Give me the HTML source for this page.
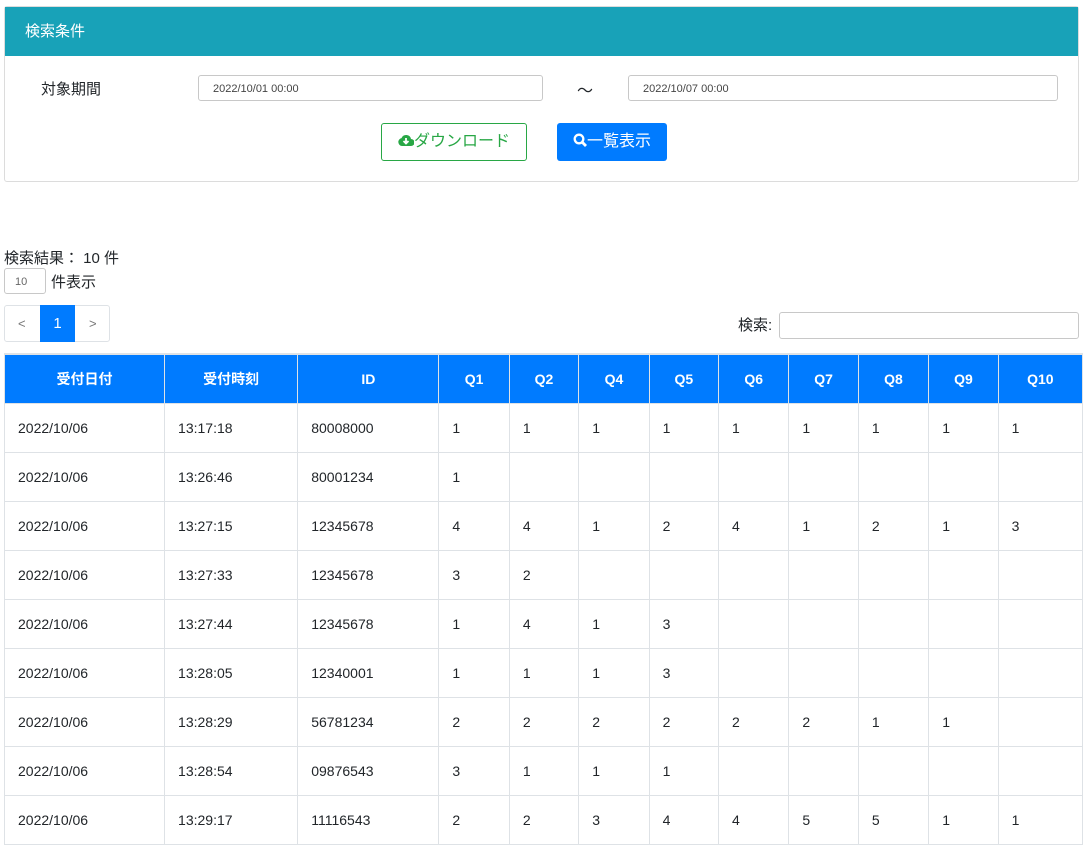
<!DOCTYPE html>
<html><head><meta charset="utf-8"><style>
body{margin:0;background:#fff;font-family:"Liberation Sans","Noto Sans CJK JP",sans-serif;color:#212529;width:1083px;height:840px;overflow:hidden;position:relative}
.a{position:absolute}
.panel{left:4px;top:6px;width:1073px;height:174px;border:1px solid #dcdcdc;border-radius:3px}
.ph{left:0;top:0;width:1073px;height:49px;background:#18a2b8;color:#fff;font-size:15px;line-height:49px;padding-left:20px;box-sizing:border-box}
.inp{border:1px solid #c8c8c8;border-radius:3px;height:26px;font-size:11px;line-height:26px;padding-left:14px;box-sizing:border-box;color:#444}
table{position:absolute;left:4px;top:353px;border-collapse:collapse;font-size:14px}
th{background:#007bff;color:#fff;font-weight:bold;height:48px;border:1px solid #dee2e6;border-top:2px solid #dee2e6;text-align:center;padding:0}
td{height:48px;border:1px solid #dee2e6;padding:0 0 0 13px}
</style></head><body>
<div class="a panel">
<div class="a ph">検索条件</div>
<div class="a" style="left:36px;top:71px;font-size:15px">対象期間</div>
<div class="a inp" style="left:193px;top:68px;width:345px">2022/10/01 00:00</div>
<div class="a" style="left:572px;top:70px;font-size:16px">～</div>
<div class="a inp" style="left:623px;top:68px;width:430px">2022/10/07 00:00</div>
<div class="a" style="left:376px;top:116px;width:146px;height:38px;border:1px solid #28a745;border-radius:3px;box-sizing:border-box;color:#28a745;font-size:16px;line-height:36px;text-align:center">
<svg width="16" height="13" viewBox="0 0 16 13" style="vertical-align:-1px"><path d="M4 12a4 4 0 0 1-.5-7.9A5 5 0 0 1 13 5a3.5 3.5 0 0 1 0 7z" fill="#28a745"/><path d="M8 4v5M5.5 7l2.5 2.5L10.5 7" stroke="#fff" stroke-width="1.8" fill="none"/></svg>ダウンロード</div>
<div class="a" style="left:552px;top:116px;width:110px;height:38px;background:#007bff;border-radius:3px;color:#fff;font-size:16px;line-height:38px;text-align:center">
<svg width="14" height="14" viewBox="0 0 14 14" style="vertical-align:-1px"><circle cx="6" cy="6" r="4.3" stroke="#fff" stroke-width="2.3" fill="none"/><path d="M9 9l4 4" stroke="#fff" stroke-width="2.8"/></svg>一覧表示</div>
</div>
<div class="a" style="left:4px;top:247px;font-size:15px">検索結果： 10 件</div>
<div class="a inp" style="left:4px;top:268px;width:42px;height:26px;padding-left:10px;color:#666">10</div>
<div class="a" style="left:51px;top:271px;font-size:15px">件表示</div>
<div class="a" style="left:4px;top:305px;width:106px;height:37px;border:1px solid #dee2e6;border-radius:3px;box-sizing:border-box;font-size:13px;color:#777;line-height:35px">
<span class="a" style="left:13px">&lt;</span><span class="a" style="left:35px;top:-1px;width:35px;height:37px;background:#007bff;color:#fff;text-align:center;line-height:37px;font-size:15px">1</span><span class="a" style="left:84px">&gt;</span></div>
<div class="a" style="left:738px;top:314px;font-size:15px">検索:</div>
<div class="a inp" style="left:779px;top:312px;width:300px;height:27px"></div>
<table>
<tr><th style="width:160px">受付日付</th><th style="width:133px">受付時刻</th><th style="width:141px">ID</th><th style="width:70px">Q1</th><th style="width:69px">Q2</th><th style="width:70px">Q4</th><th style="width:69px">Q5</th><th style="width:70px">Q6</th><th style="width:69px">Q7</th><th style="width:70px">Q8</th><th style="width:69px">Q9</th><th style="width:84px">Q10</th></tr>
<tr><td>2022/10/06</td><td>13:17:18</td><td>80008000</td><td>1</td><td>1</td><td>1</td><td>1</td><td>1</td><td>1</td><td>1</td><td>1</td><td>1</td></tr>
<tr><td>2022/10/06</td><td>13:26:46</td><td>80001234</td><td>1</td><td></td><td></td><td></td><td></td><td></td><td></td><td></td><td></td></tr>
<tr><td>2022/10/06</td><td>13:27:15</td><td>12345678</td><td>4</td><td>4</td><td>1</td><td>2</td><td>4</td><td>1</td><td>2</td><td>1</td><td>3</td></tr>
<tr><td>2022/10/06</td><td>13:27:33</td><td>12345678</td><td>3</td><td>2</td><td></td><td></td><td></td><td></td><td></td><td></td><td></td></tr>
<tr><td>2022/10/06</td><td>13:27:44</td><td>12345678</td><td>1</td><td>4</td><td>1</td><td>3</td><td></td><td></td><td></td><td></td><td></td></tr>
<tr><td>2022/10/06</td><td>13:28:05</td><td>12340001</td><td>1</td><td>1</td><td>1</td><td>3</td><td></td><td></td><td></td><td></td><td></td></tr>
<tr><td>2022/10/06</td><td>13:28:29</td><td>56781234</td><td>2</td><td>2</td><td>2</td><td>2</td><td>2</td><td>2</td><td>1</td><td>1</td><td></td></tr>
<tr><td>2022/10/06</td><td>13:28:54</td><td>09876543</td><td>3</td><td>1</td><td>1</td><td>1</td><td></td><td></td><td></td><td></td><td></td></tr>
<tr><td>2022/10/06</td><td>13:29:17</td><td>11116543</td><td>2</td><td>2</td><td>3</td><td>4</td><td>4</td><td>5</td><td>5</td><td>1</td><td>1</td></tr>
</table>
</body></html>
